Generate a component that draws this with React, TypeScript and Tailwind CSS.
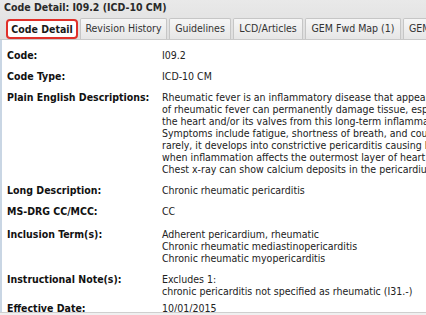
const TABS = [
  { t: 'Code Detail', w: 'w-[72px]' },
  { t: 'Revision History', w: 'w-[87px]' },
  { t: 'Guidelines', w: 'w-[62px]' },
  { t: 'LCD/Articles', w: 'w-[70px]' },
  { t: 'GEM Fwd Map (1)', w: 'w-[96px]' },
  { t: 'GEM Bwd Map (1)', w: 'w-[96px]' },
]

const DESC = [
  'Rheumatic fever is an inflammatory disease that appears after a strep infection. Complications',
  'of rheumatic fever can permanently damage tissue, especially',
  'the heart and/or its valves from this long-term inflammation.',
  'Symptoms include fatigue, shortness of breath, and cough. More',
  'rarely, it develops into constrictive pericarditis causing heart failure',
  'when inflammation affects the outermost layer of heart tissue.',
  'Chest x-ray can show calcium deposits in the pericardium.',
]

type Row = { label: string, lines: string[], pb?: string }

const ROWS: Row[] = [
  { label: 'Code:', lines: ['I09.2'] },
  { label: 'Code Type:', lines: ['ICD-10 CM'] },
  { label: 'Plain English Descriptions:', lines: DESC },
  { label: 'Long Description:', lines: ['Chronic rheumatic pericarditis'] },
  { label: 'MS-DRG CC/MCC:', lines: ['CC'], pb: 'pb-[7px]' },
  { label: 'Inclusion Term(s):', lines: ['Adherent pericardium, rheumatic', 'Chronic rheumatic mediastinopericarditis', 'Chronic rheumatic myopericarditis'] },
  { label: 'Instructional Note(s):', lines: ['Excludes 1:', 'chronic pericarditis not specified as rheumatic (I31.-)'], pb: 'pb-[1px]' },
  { label: 'Effective Date:', lines: ['10/01/2015'] },
]

export default function App() {
  return (
    <div className="w-[426px] h-[315px] overflow-hidden flex flex-col bg-white text-[10.5px] text-[#222]" style={{ fontFamily: '"DejaVu Sans Condensed", "DejaVu Sans", sans-serif' }}>
      <div className="bg-gradient-to-b from-[#e9e9e9] to-[#dedede]">
        <div className="h-[15px] px-[4px] leading-[15px] font-bold text-[#2a2a2a] whitespace-nowrap">Code Detail: I09.2 (ICD-10 CM)</div>
        <div className="h-[25px] flex items-end gap-[2px] pl-[6px] border-b border-[#c9c9c9] whitespace-nowrap">
          {TABS.map((t, i) => (
            <div
              key={t.t}
              className={(i === 0
                ? 'h-[20px] leading-[16px] bg-white border-2 border-[#e0302a] rounded-[4px] font-bold text-[#1a1a1a]'
                : 'h-[21px] leading-[19px] bg-gradient-to-b from-[#f6f6f6] to-[#e6e6e6] border border-[#c6c6c6] border-b-0 rounded-t-[2px] text-[#333]') + ' shrink-0 text-center ' + t.w}
            >
              {t.t}
            </div>
          ))}
        </div>
      </div>
      <div className="flex-1 border-l-2 border-[#c9d6e4] overflow-hidden pt-[5px]">
        {ROWS.map(r => (
          <div key={r.label} className={'flex pt-[4px] ' + (r.pb || 'pb-[5px]')}>
            <div className="w-[160px] shrink-0 pl-[5px] font-bold text-[#111] leading-[12px]">{r.label}</div>
            <div className="whitespace-nowrap leading-[12px]">
              {r.lines.map((l, i) => <div key={i}>{l}</div>)}
            </div>
          </div>
        ))}
      </div>
      <div className="h-[3px] border-t border-[#cfcfcf] bg-[#f0f0f0]" />
    </div>
  )
}
